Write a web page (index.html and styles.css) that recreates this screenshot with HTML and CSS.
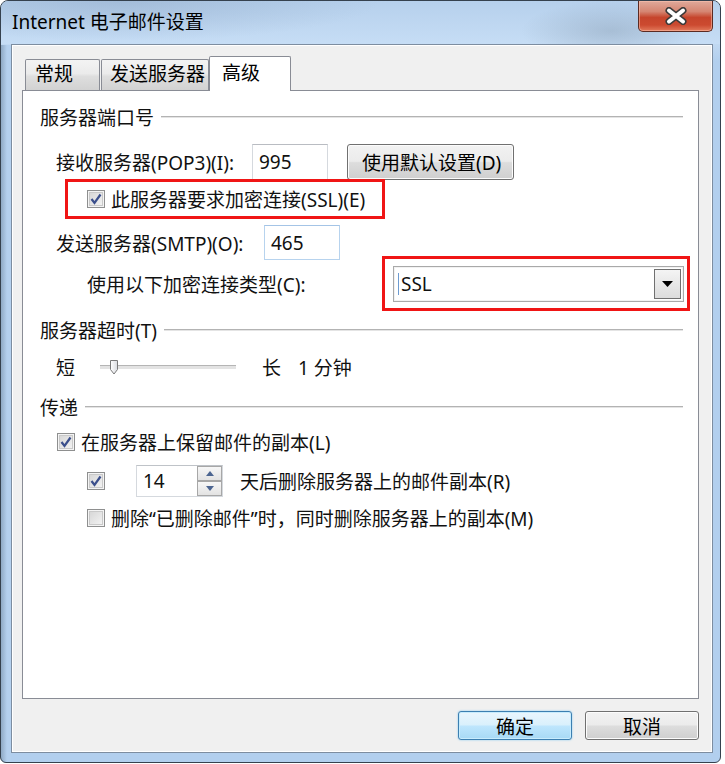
FILE: index.html
```html
<!DOCTYPE html>
<html lang="zh-CN">
<head>
  <meta charset="UTF-8">
  <meta name="viewport" content="width=device-width, initial-scale=1.0">
  <title>Internet 电子邮件设置</title>
  <link rel="stylesheet" href="styles.css">
</head>
<body>
  <div class="window">
    <div class="titlebar">
      <span class="title">Internet 电子邮件设置</span>
      <button class="close-btn" aria-label="关闭">
        <svg width="26" height="18" viewBox="0 0 26 18">
          <path d="M6 3.5 L20 14.5 M20 3.5 L6 14.5" stroke="#3a3a3a" stroke-width="7" stroke-linecap="round"/>
          <path d="M6 3.5 L20 14.5 M20 3.5 L6 14.5" stroke="#ffffff" stroke-width="4" stroke-linecap="round"/>
        </svg>
      </button>
    </div>

    <div class="client">
      <div class="tabs">
        <div class="tab tab-general">常规</div>
        <div class="tab tab-outgoing">发送服务器</div>
        <div class="tab tab-active">高级</div>
      </div>

      <div class="tab-panel">
        <div class="group">服务器端口号</div>

        <div class="row row-incoming">
          <span class="field-label label-pop">接收服务器(POP3)(I):</span>
          <span class="textbox">995</span>
          <button class="btn btn-defaults">使用默认设置(D)</button>
        </div>

        <div class="row row-ssl">
          <div class="mark mark-ssl">
            <span class="checkbox">
              <svg width="14" height="14" viewBox="0 0 14 14"><path d="M2.5 7 L5.5 11 L11.5 2.5" fill="none" stroke="#3b4f8c" stroke-width="2.2"/></svg>
            </span>
            <span class="check-text">此服务器要求加密连接(SSL)(E)</span>
          </div>
        </div>

        <div class="row row-smtp">
          <span class="field-label label-smtp">发送服务器(SMTP)(O):</span>
          <span class="textbox textbox-hover">465</span>
        </div>

        <div class="row row-type">
          <span class="field-label label-type">使用以下加密连接类型(C):</span>
          <div class="mark mark-type">
            <div class="combo">
              <span class="caret"></span>
              <span class="combo-value">SSL</span>
              <span class="combo-drop">
                <svg width="11" height="6" viewBox="0 0 11 6"><path d="M0 0 H11 L5.5 6 Z" fill="#000000"/></svg>
              </span>
            </div>
          </div>
        </div>

        <div class="group group-timeout">服务器超时(T)</div>

        <div class="row row-slider">
          <span>短</span>
          <div class="trackbar">
            <svg class="thumb" width="10" height="15" viewBox="0 0 10 15">
              <defs>
                <linearGradient id="thumbFill" x1="0" y1="0" x2="1" y2="0">
                  <stop offset="0" stop-color="#ffffff"/>
                  <stop offset="1" stop-color="#d9dbe0"/>
                </linearGradient>
              </defs>
              <path d="M1.5 0.5 H8.5 V9.5 L5 14 L1.5 9.5 Z" fill="url(#thumbFill)" stroke="#7a7a7a"/>
            </svg>
          </div>
          <span class="slider-long">长</span>
          <span class="slider-value">1 分钟</span>
        </div>

        <div class="group group-delivery">传递</div>

        <div class="row row-keep">
          <span class="checkbox">
            <svg width="14" height="14" viewBox="0 0 14 14"><path d="M2.5 7 L5.5 11 L11.5 2.5" fill="none" stroke="#3b4f8c" stroke-width="2.2"/></svg>
          </span>
          <span class="check-text">在服务器上保留邮件的副本(L)</span>
        </div>

        <div class="row row-days">
          <span class="checkbox">
            <svg width="14" height="14" viewBox="0 0 14 14"><path d="M2.5 7 L5.5 11 L11.5 2.5" fill="none" stroke="#3b4f8c" stroke-width="2.2"/></svg>
          </span>
          <div class="spinner">
            <span class="spinner-value">14</span>
            <div class="spin-buttons">
              <span class="spin-btn"><svg width="8" height="5" viewBox="0 0 8 5"><path d="M0 5 L4 0 L8 5 Z" fill="#4c6591"/></svg></span>
              <span class="spin-btn"><svg width="8" height="5" viewBox="0 0 8 5"><path d="M0 0 H8 L4 5 Z" fill="#4c6591"/></svg></span>
            </div>
          </div>
          <span class="days-text">天后删除服务器上的邮件副本(R)</span>
        </div>

        <div class="row row-remove">
          <span class="checkbox"></span>
          <span class="check-text">删除“已删除邮件”时，同时删除服务器上的副本(M)</span>
        </div>
      </div>

      <div class="dialog-buttons">
        <button class="btn btn-primary">确定</button>
        <button class="btn">取消</button>
      </div>
    </div>
  </div>
</body>
</html>
```

FILE: styles.css
```css
body {
  margin: 0;
  background-color: #ffffff;
  font-family: "Noto Sans", "Noto Sans CJK SC", sans-serif;
  font-size: 19px;
  color: #111111;
}

.window {
  width: 721px;
  height: 763px;
  box-sizing: border-box;
  display: flex;
  flex-direction: column;
  padding: 0 7px 9px 10px;
  border: 1px solid #35414e;
  border-radius: 8px 8px 6px 6px;
  background:
    linear-gradient(to right, #8fa9c4 0, #b4d0ee 6px, #b4d0ee 100%) left 44px / 10px 100% no-repeat,
    linear-gradient(to bottom, #b7cfe8 0, #c3daf2 40px, #b2cfee 60px, #b2cfee 100%);
}

.titlebar {
  display: flex;
  height: 43px;
  flex-shrink: 0;
  background:
    radial-gradient(ellipse 90px 30px at 610px 30px, rgba(120, 140, 160, 0.35), transparent),
    radial-gradient(ellipse 260px 40px at 120px 0, rgba(140, 165, 195, 0.45), transparent),
    linear-gradient(to bottom, #b6d0ec, #c6ddf5);
  margin: 0 -7px 0 -10px;
  padding: 0 7px 0 10px;
  border-radius: 7px 7px 0 0;
}

.title {
  padding: 6px 0 0 1px;
  line-height: 30px;
  color: #000000;
}

.close-btn {
  margin-left: auto;
  width: 75px;
  height: 31px;
  padding: 0;
  border: 1px solid #5b2a22;
  border-top: none;
  border-radius: 0 0 5px 5px;
  background: linear-gradient(to bottom, #dfa99b 0, #d58672 35%, #c6452c 55%, #cc4a30 80%, #e27a5c 100%);
  box-shadow: inset 0 0 0 1px rgba(255, 200, 180, 0.5);
  display: flex;
  align-items: center;
  justify-content: center;
}

.client {
  flex: 1;
  display: flex;
  flex-direction: column;
  padding: 11px 13px 12px 10px;
  background-color: #f0f0f0;
  border: 1px solid #7d8da0;
  box-shadow: inset 0 0 0 1px #ffffff;
}

.tabs {
  display: flex;
  align-items: flex-end;
  height: 34px;
  margin-left: 3px;
  position: relative;
  z-index: 1;
}

.tab {
  box-sizing: border-box;
  height: 31px;
  line-height: 29px;
  border: 1px solid #898c95;
  border-bottom: none;
  border-radius: 2px 2px 0 0;
  background: linear-gradient(to bottom, #f3f3f3 0, #ebebeb 45%, #dedede 55%, #d2d2d2 100%);
  color: #000000;
}

.tab-general {
  width: 75px;
  padding-left: 9px;
}

.tab-outgoing {
  width: 108px;
  margin-left: 1px;
  padding-left: 8px;
}

.tab-active {
  width: 82px;
  height: 35px;
  margin-bottom: -1px;
  padding: 2px 0 0 12px;
  background: #ffffff;
}

.tab-panel {
  box-sizing: border-box;
  height: 609px;
  padding: 14px 15px 0 17px;
  background-color: #ffffff;
  border: 1px solid #898c95;
  display: flex;
  flex-direction: column;
}

.group {
  display: flex;
  align-items: center;
  height: 24px;
  gap: 7px;
  white-space: nowrap;
}

.group::after {
  content: "";
  flex: 1;
  height: 1px;
  background-color: #b3b3b3;
  border-bottom: 1px solid #e4e4e4;
}

.row {
  display: flex;
  align-items: center;
  white-space: nowrap;
}

.field-label {
  flex-shrink: 0;
}

.textbox {
  box-sizing: border-box;
  width: 76px;
  height: 100%;
  padding-left: 6px;
  display: flex;
  align-items: center;
  border: 1px solid #d5d9de;
  border-top-color: #b9bcc2;
  background-color: #ffffff;
}

.textbox-hover {
  border-color: #b7d3ee;
  border-top-color: #a4c4e6;
}

.btn {
  box-sizing: border-box;
  height: 100%;
  font: inherit;
  color: #000000;
  border: 1px solid #707070;
  border-radius: 3px;
  background: linear-gradient(to bottom, #f2f2f2 0, #ebebeb 48%, #dddddd 52%, #cfcfcf 100%);
  box-shadow: inset 0 0 0 1px #fcfcfc;
  padding: 0;
}

.row-incoming {
  height: 36px;
  margin: 15px 0 0 16px;
}

.label-pop {
  width: 196px;
}

.btn-defaults {
  width: 167px;
  margin-left: 19px;
  text-align: left;
  padding-left: 14px;
}

.mark {
  box-sizing: border-box;
  flex-shrink: 0;
  border: 3px solid #f01515;
  display: flex;
  align-items: center;
}

.row-ssl {
  height: 40px;
  margin: -1px 0 0 25px;
}

.mark-ssl {
  width: 320px;
  height: 100%;
  padding-left: 19px;
}

.checkbox {
  box-sizing: border-box;
  width: 18px;
  height: 18px;
  flex-shrink: 0;
  border: 1px solid #8e8f8f;
  background: linear-gradient(135deg, #d3d3d3, #f6f6f6);
  box-shadow: inset 0 0 0 1px #f4f4f4, inset 0 0 0 2px #c9c9c9;
  display: flex;
  align-items: center;
  justify-content: center;
}

.check-text {
  margin-left: 6px;
}

.row-smtp {
  height: 35px;
  margin: 6px 0 0 16px;
}

.label-smtp {
  width: 208px;
}

.row-type {
  height: 55px;
  margin: -4px 0 0 47px;
}

.label-type {
  width: 295px;
}

.mark-type {
  width: 308px;
  height: 100%;
  padding: 7px 3px 6px 8px;
}

.combo {
  box-sizing: border-box;
  flex: 1;
  height: 100%;
  display: flex;
  align-items: center;
  border: 1px solid #a9a9a9;
  box-shadow: inset 0 0 0 1px #f2f2f2;
  background-color: #ffffff;
  padding: 0 2px 0 4px;
}

.caret {
  width: 1px;
  height: 22px;
  background-color: #6d9bd1;
}

.combo-value {
  margin-left: 2px;
  flex: 1;
}

.combo-drop {
  box-sizing: border-box;
  width: 27px;
  height: 30px;
  border: 1px solid #707070;
  background: linear-gradient(to bottom, #f4f4f4, #dcdcdc);
  display: flex;
  align-items: center;
  justify-content: center;
}

.group-timeout {
  margin-top: 7px;
}

.row-slider {
  height: 24px;
  margin: 13px 0 0 16px;
}

.trackbar {
  position: relative;
  width: 136px;
  height: 3px;
  margin-left: 25px;
  border-top: 1px solid #b5b5b5;
  border-bottom: 1px solid #ffffff;
  background-color: #e3e3e3;
}

.thumb {
  position: absolute;
  left: 9px;
  top: -6px;
}

.slider-long {
  margin-left: 26px;
}

.slider-value {
  margin-left: 17px;
}

.group-delivery {
  margin-top: 16px;
}

.row-keep {
  height: 24px;
  margin: 11px 0 0 17px;
}

.row-days {
  height: 32px;
  margin: 11px 0 0 47px;
}

.spinner {
  box-sizing: border-box;
  width: 87px;
  height: 100%;
  margin-left: 31px;
  display: flex;
  align-items: center;
  border: 1px solid #d5d9de;
  border-top-color: #bfc3c8;
  background-color: #ffffff;
}

.spinner-value {
  flex: 1;
  padding-left: 6px;
}

.spin-buttons {
  display: flex;
  flex-direction: column;
  width: 25px;
  height: 100%;
}

.spin-btn {
  flex: 1;
  box-sizing: border-box;
  border: 1px solid #a7a7a7;
  background: linear-gradient(to bottom, #f7f7f7, #e3e3e3);
  display: flex;
  align-items: center;
  justify-content: center;
}

.days-text {
  margin-left: 17px;
}

.row-remove {
  height: 24px;
  margin: 9px 0 0 47px;
}

.dialog-buttons {
  display: flex;
  justify-content: flex-end;
  gap: 13px;
  height: 29px;
  margin-top: 12px;
}

.dialog-buttons .btn {
  width: 114px;
}

.btn-primary {
  border-color: #3c7fb1;
  background: linear-gradient(to bottom, #eaf6fd 0, #d9f0fc 48%, #bee6fd 52%, #a7d9f5 100%);
  box-shadow: inset 0 0 0 1px #c8ecfd, 0 0 2px #7cc4ef;
}
```
